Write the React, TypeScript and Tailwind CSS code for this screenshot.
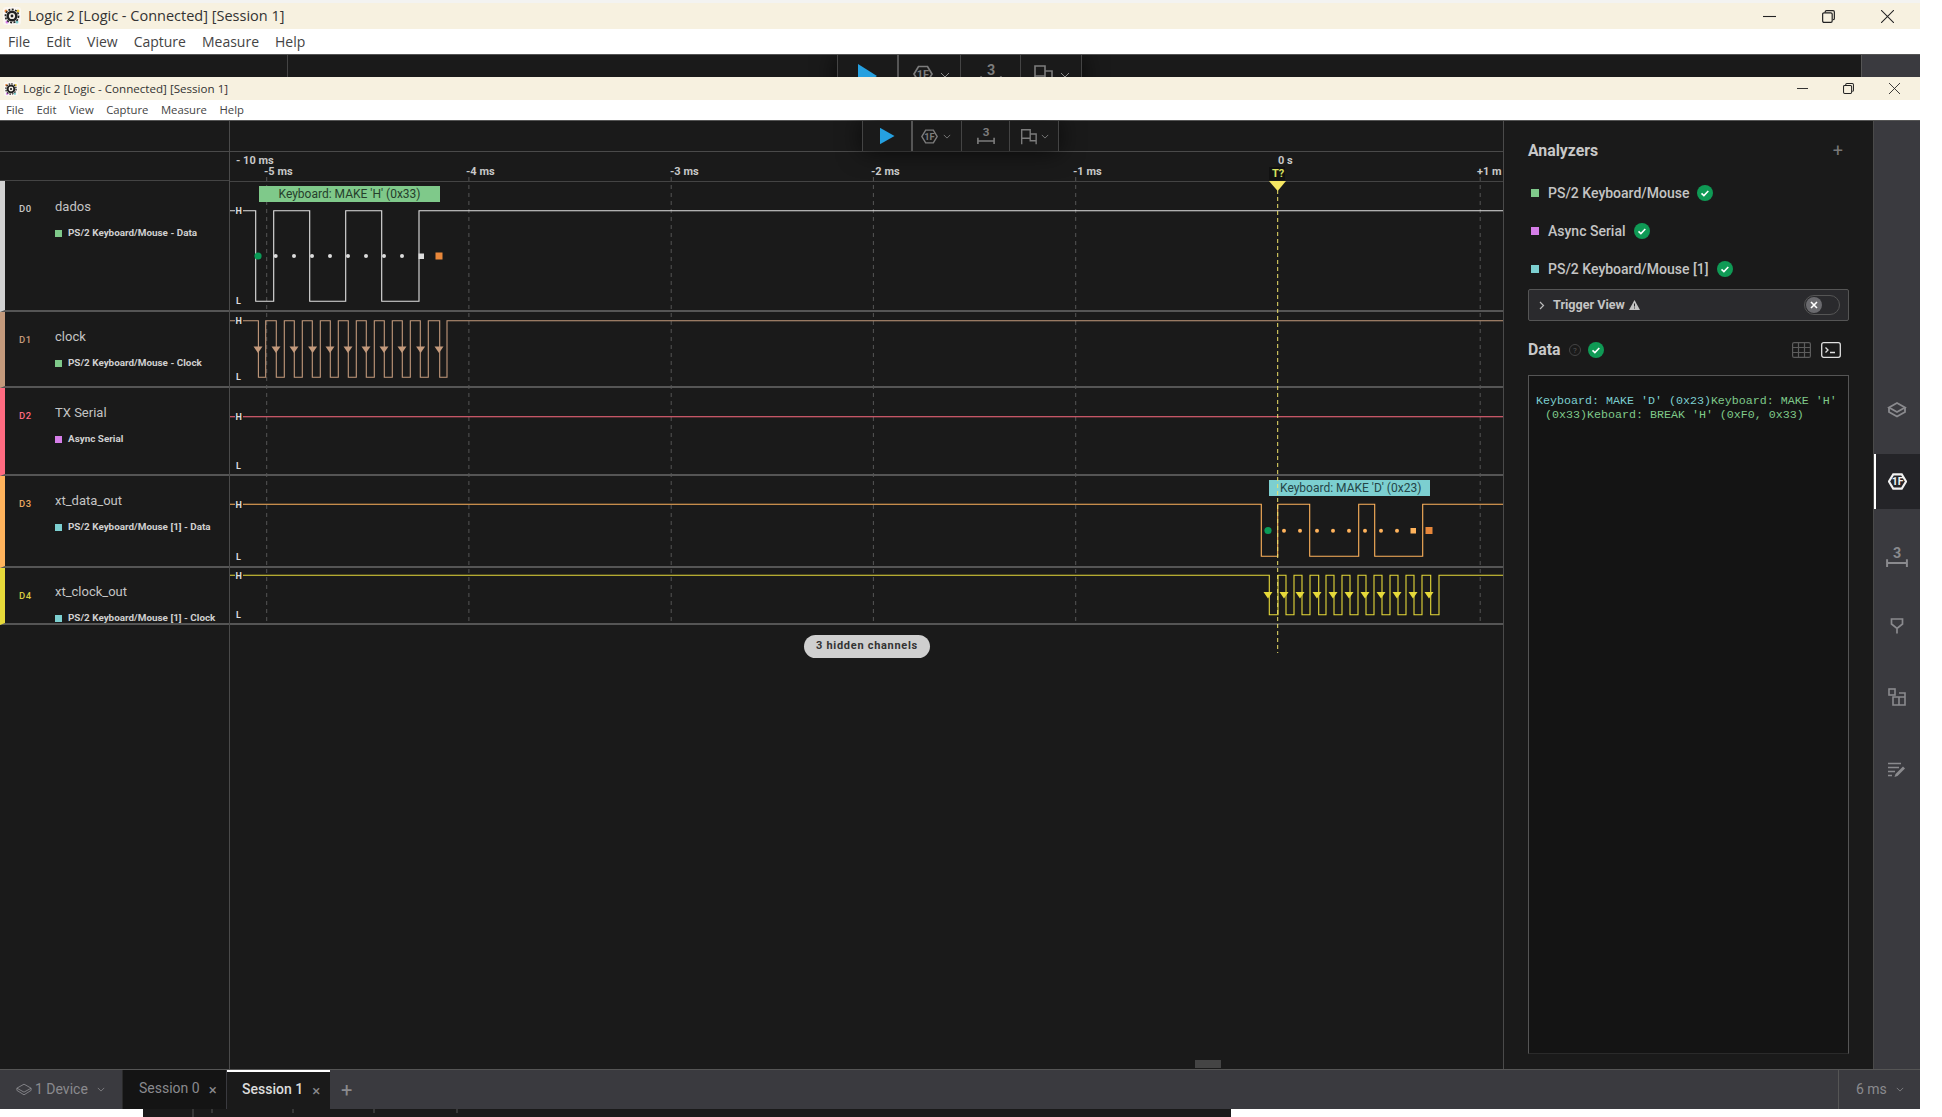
import React from "react";

const GRID = [266.7, 468.9, 671.2, 873.4, 1075.7, 1480.2];
const TICKS = [
  { x: 264, label: "-5 ms" },
  { x: 466, label: "-4 ms" },
  { x: 670, label: "-3 ms" },
  { x: 871, label: "-2 ms" },
  { x: 1073, label: "-1 ms" },
  { x: 1477, label: "+1 m" },
];
const SEPARATORS = [311, 387, 475, 567, 624];

interface Channel {
  id: string;
  name: string;
  analyzer: string;
  stripe: string;
  idColor: string;
  sq: string;
  height: string;
  pad: string;
}

const channels: Channel[] = [
  { id: "D0", name: "dados", analyzer: "PS/2 Keyboard/Mouse - Data", stripe: "border-l-[#d2d2d2]", idColor: "text-[#c8c8c8]", sq: "bg-[#7fc98a]", height: "h-[131px]", pad: "pt-[17px]" },
  { id: "D1", name: "clock", analyzer: "PS/2 Keyboard/Mouse - Clock", stripe: "border-l-[#c49a7c]", idColor: "text-[#c49a7c]", sq: "bg-[#7fc98a]", height: "h-[76px]", pad: "pt-[16px]" },
  { id: "D2", name: "TX Serial", analyzer: "Async Serial", stripe: "border-l-[#ff6b81]", idColor: "text-[#ff6b81]", sq: "bg-[#d57ee8]", height: "h-[88px]", pad: "pt-[16px]" },
  { id: "D3", name: "xt_data_out", analyzer: "PS/2 Keyboard/Mouse [1] - Data", stripe: "border-l-[#ffb35c]", idColor: "text-[#e8a860]", sq: "bg-[#7ccfd0]", height: "h-[92px]", pad: "pt-[16px]" },
  { id: "D4", name: "xt_clock_out", analyzer: "PS/2 Keyboard/Mouse [1] - Clock", stripe: "border-l-[#e6d93a]", idColor: "text-[#d8cc40]", sq: "bg-[#7ccfd0]", height: "h-[57px]", pad: "pt-[15px]" },
];

// builds a digital trace from its edges; starts high
function trace(high: number, low: number, edges: number[], end: number) {
  let d = `M230 ${high}`;
  edges.forEach((x, i) => {
    d += ` L${x} ${i % 2 === 0 ? high : low} L${x} ${i % 2 === 0 ? low : high}`;
  });
  return d + ` L${end} ${high}`;
}

const d0Edges = [255.7, 273.7, 309.7, 345.7, 381.7, 419];
const d1Edges = [258.4, 265.7, 276.3, 284.3, 294.3, 302.3, 312.3, 320.3, 330.3, 338.3, 348.3, 356.3, 366.3, 374.3, 384.3, 392.3, 402.3, 410.3, 420.3, 428.3, 439.7, 447];
const d3Edges = [1261.3, 1277.7, 1309.7, 1358.7, 1374.7, 1422.7];
const d4Edges = [1269.3, 1278, 1286, 1294, 1302, 1310, 1318.7, 1326, 1334, 1342, 1350, 1358, 1366, 1374, 1382, 1390, 1398, 1406, 1414, 1422, 1430.7, 1439];
const d1Arrows = [258, 276, 294, 312.6, 330, 348, 366, 384, 402, 420.6, 439];
const d4Arrows = [1268, 1284, 1300, 1317, 1333, 1349, 1365, 1381, 1397, 1413, 1429];
const d0Dots = [275.7, 294, 312, 330, 348, 366, 384, 402];
const d3Dots = [1284, 1300, 1317, 1333, 1349, 1365, 1381, 1397];

function HL({ high, low }: { high: number; low: number }) {
  return (
    <g className="font-[Roboto,sans-serif] text-[9px] font-bold fill-[#dcdcdc]">
      <rect x={235} y={high - 4} width={8} height={8} fill="#1a1a1a" />
      <text x={235.5} y={high + 3.2}>H</text>
      <text x={236} y={low + 3}>L</text>
    </g>
  );
}

function Arrows({ xs, y, color, w }: { xs: number[]; y: number; color: string; w: number }) {
  return (
    <>
      {xs.map((x) => (
        <polygon key={x} points={`${x - w},${y - 3} ${x + w},${y - 3} ${x},${y + 3.5}`} fill={color} />
      ))}
    </>
  );
}

function Timeline() {
  return (
    <svg className="block w-[1273px] h-[917px]" viewBox="230 152 1273 917">
      {GRID.map((x) => (
        <line key={x} x1={x} x2={x} y1={177} y2={624} stroke="#555" strokeWidth={1} strokeDasharray="4 4" />
      ))}
      <line x1={230} x2={1503} y1={181.5} y2={181.5} stroke="#444" />
      {SEPARATORS.map((y) => (
        <line key={y} x1={230} x2={1503} y1={y} y2={y} stroke="#555" strokeWidth={2} />
      ))}

      <g className="font-[Roboto,sans-serif] text-[11px] font-bold fill-[#c8c8c8]">
        <text x={236} y={164}>- 10 ms</text>
        {TICKS.map((t) => (
          <text key={t.label} x={t.x} y={175}>{t.label}</text>
        ))}
        <text x={1278} y={164}>0 s</text>
        <rect x={1269} y={167} width={16} height={13} fill="#111" />
        <text x={1272} y={177} className="fill-[#d8e060]">T?</text>
      </g>

      {/* D0 */}
      <path d={trace(210.7, 301.3, d0Edges, 1503)} fill="none" stroke="#e2e2e2" strokeWidth={1.1} />
      <HL high={210.7} low={301} />
      <circle cx={258} cy={256} r={3.6} fill="#0b9b57" />
      {d0Dots.map((x) => (
        <circle key={x} cx={x} cy={256} r={2} fill="#dcdcdc" />
      ))}
      <rect x={418.5} y={253.5} width={5.5} height={5.5} fill="#dcdcdc" />
      <rect x={435.5} y={252.5} width={7} height={7} fill="#e8873a" />
      <rect x={259} y={186} width={181} height={16} fill="#7fc98a" />
      <text x={349.5} y={198} textAnchor="middle" className="font-[Roboto,sans-serif] text-[12px] fill-[#26402c]">Keyboard: MAKE &#39;H&#39; (0x33)</text>

      {/* D1 */}
      <path d={trace(320.7, 377.3, d1Edges, 1503)} fill="none" stroke="#c49a7c" strokeWidth={1.1} />
      <HL high={320.7} low={377} />
      <Arrows xs={d1Arrows} y={349.5} color="#c49a7c" w={4.5} />

      {/* D2 */}
      <line x1={230} x2={1503} y1={416.7} y2={416.7} stroke="#ff6b81" strokeWidth={1.1} />
      <HL high={416.7} low={466} />

      {/* D3 */}
      <path d={trace(504.3, 556.3, d3Edges, 1503)} fill="none" stroke="#ffb35c" strokeWidth={1.1} />
      <HL high={504.3} low={557} />
      <circle cx={1268} cy={530.5} r={3.6} fill="#0b9b57" />
      {d3Dots.map((x) => (
        <circle key={x} cx={x} cy={530.7} r={2} fill="#ffb35c" />
      ))}
      <rect x={1410.5} y={528} width={5.5} height={5.5} fill="#ffb35c" />
      <rect x={1425.5} y={527} width={7} height={7} fill="#e8873a" />
      <rect x={1269} y={480} width={161} height={16} fill="#7ccfd0" />
      <text x={1280} y={492} className="font-[Roboto,sans-serif] text-[12px] fill-[#244548]">Keyboard: MAKE &#39;D&#39; (0x23)</text>

      {/* D4 */}
      <path d={trace(575.3, 614.7, d4Edges, 1503)} fill="none" stroke="#e6d93a" strokeWidth={1.1} />
      <HL high={575.3} low={615} />
      <Arrows xs={d4Arrows} y={595} color="#e6d93a" w={4.5} />

      {/* trigger cursor */}
      <line x1={1277.7} x2={1277.7} y1={190} y2={653} stroke="#efe36a" strokeWidth={1} strokeDasharray="4 3" />
      <polygon points="1269,181 1286,181 1277.7,191" fill="#f5e663" />
    </svg>
  );
}

function Hex({ size, white }: { size: number; white?: boolean }) {
  const c = white ? "#f2f2f2" : "#7c7c7c";
  return (
    <svg width={size} height={size} viewBox="0 0 20 20" fill="none">
      <path d="M5.5 2.5h9L19 10l-4.5 7.5h-9L1 10z" stroke={c} strokeWidth={white ? 2.2 : 1.7} />
      <text x={10} y={13.8} textAnchor="middle" fill={c} className="font-[Roboto,sans-serif] text-[11px] font-bold">1F</text>
    </svg>
  );
}

function Measure({ size, color = "#7c7c7c" }: { size: number; color?: string }) {
  return (
    <svg className="overflow-visible" width={size} height={size} viewBox="0 0 20 20" fill="none">
      <text x={10} y={10.5} textAnchor="middle" fill={color} className="font-[Roboto,sans-serif] text-[13px] font-bold">3</text>
      <path d="M1 12v7M19 12v7M1 15.5h18" stroke={color} strokeWidth={1.8} />
    </svg>
  );
}

function Marker({ size }: { size: number }) {
  return (
    <svg width={size} height={size} viewBox="0 0 20 20" fill="none" stroke="#7c7c7c" strokeWidth={1.6}>
      <path d="M2 19V2h10v10H2M12 7h7v12M12 12v3h7" />
    </svg>
  );
}

function Chevron({ className }: { className: string }) {
  return (
    <svg className={className} viewBox="0 0 10 6" fill="none" stroke="currentColor" strokeWidth={1}>
      <path d="M1 1l4 4 4-4" />
    </svg>
  );
}

function Logo({ size }: { size: number }) {
  return (
    <svg width={size} height={size} viewBox="0 0 18 18">
      <rect x={0} y={0} width={18} height={18} rx={3} fill="#fbf7f2" />
      <circle cx={3} cy={4} r={1.5} fill="#e8873a" />
      <circle cx={15} cy={4} r={1.5} fill="#e8c23a" />
      <circle cx={4} cy={15} r={1.5} fill="#d57ee8" />
      <circle cx={14} cy={15} r={1.5} fill="#7ccfd0" />
      <circle cx={9} cy={9} r={6.6} fill="none" stroke="#222" strokeWidth={1.6} strokeDasharray="2 1.4" />
      <circle cx={9} cy={9} r={5.6} fill="#222" />
      <circle cx={9} cy={9} r={3.1} fill="#f4f0e8" />
      <circle cx={9} cy={9} r={1.4} fill="#222" />
    </svg>
  );
}

function WinControls({ big }: { big?: boolean }) {
  return (
    <div className={big ? "flex items-center gap-[46px] pr-[26px]" : "flex items-center gap-[35px] pr-[20px]"}>
      <svg className={big ? "w-[13px] h-[13px]" : "w-[11px] h-[11px]"} viewBox="0 0 12 12" stroke="#222" strokeWidth={1}>
        <path d="M0 6h12" />
      </svg>
      <svg className={big ? "w-[13px] h-[13px]" : "w-[11px] h-[11px]"} viewBox="0 0 12 12" fill="none" stroke="#222" strokeWidth={1.1}>
        <rect x={0.6} y={2.6} width={8.8} height={8.8} rx={1.2} />
        <path d="M3 2.4V1.7Q3 .6 4.2 .6h6Q11.4 .6 11.4 1.8v6q0 1.2-1.4 1.2" />
      </svg>
      <svg className={big ? "w-[13px] h-[13px]" : "w-[11px] h-[11px]"} viewBox="0 0 12 12" stroke="#222" strokeWidth={0.95}>
        <path d="M0 0l12 12M12 0L0 12" />
      </svg>
    </div>
  );
}

function Check() {
  return (
    <svg width={16} height={16} viewBox="0 0 16 16">
      <circle cx={8} cy={8} r={8} fill="#0f9a55" />
      <path d="M4.5 8.3l2.4 2.3 4.4-4.6" fill="none" stroke="#fff" strokeWidth={1.6} />
    </svg>
  );
}

function Analyzer({ color, name }: { color: string; name: string }) {
  return (
    <div className="flex items-center h-[38px] pl-[3px]">
      <div className={`w-[8px] h-[8px] ${color}`} />
      <span className="ml-[9px] mr-[8px] text-[14px] font-medium text-[#c4c4c4]">{name}</span>
      <Check />
    </div>
  );
}

const sessionTab = "flex items-center h-full pb-[3px] text-[14px]";
const sideSlot = "flex items-center justify-center h-[20px]";

export default function App() {
  return (
    <div className="w-[1942px] h-[1117px] bg-white overflow-hidden font-[Roboto,sans-serif]">
      <div className="w-[1920px]">
        {/* outer window chrome */}
        <div className="h-[29px] bg-[#f7f1e0] border-t-[3px] border-t-[#f3f3f1] flex items-center pl-[3px]">
          <Logo size={18} />
          <span className="ml-[7px] text-[14.5px] text-[#333] font-['Open_Sans',sans-serif]">Logic 2 [Logic - Connected] [Session 1]</span>
          <div className="flex-1" />
          <WinControls big />
        </div>
        <div className="h-[25px] bg-white flex items-center pl-[8px] gap-[16px] text-[14px] text-[#444] font-['Open_Sans',sans-serif] pb-[1px]">
          <span>File</span><span>Edit</span><span>View</span><span>Capture</span><span>Measure</span><span>Help</span>
        </div>
        <div className="h-[23px] bg-[#1a1a1a] border-t border-t-[#555] flex overflow-hidden">
          <div className="w-[288px] h-full border-r border-r-[#444]" />
          <div className="ml-[549px] h-[40px] flex items-start border-l border-l-[#444] shadow-[0_0_24px_rgba(0,0,0,0.7)]">
            <div className="w-[61px] h-full flex justify-center pt-[9px] border-r-2 border-r-[#555]">
              <div className="w-[19px] h-[24px] bg-[#25a0e0] [clip-path:polygon(0_0,100%_50%,0_100%)]" />
            </div>
            <div className="w-[62px] h-full flex items-start gap-[7px] pl-[14px] pt-[9px] border-r border-r-[#444] text-[#8a8a8a]">
              <Hex size={20} />
              <Chevron className="w-[10px] h-[6px] mt-[8px]" />
            </div>
            <div className="w-[60px] h-full flex justify-center pt-[8px] border-r border-r-[#444]">
              <Measure size={22} />
            </div>
            <div className="w-[61px] h-full flex items-start gap-[7px] pl-[12px] pt-[9px] border-r border-r-[#444] text-[#8a8a8a]">
              <Marker size={20} />
              <Chevron className="w-[10px] h-[6px] mt-[8px]" />
            </div>
          </div>
          <div className="flex-1" />
          <div className="w-[59px] h-full bg-[#3a3a3f] border-l border-l-[#555]" />
        </div>

        {/* inner window chrome */}
        <div className="relative z-10 h-[23px] bg-[#f7f1e0] flex items-center pl-[4px]">
          <Logo size={14} />
          <span className="ml-[5px] text-[11.6px] text-[#333] font-['Open_Sans',sans-serif]">Logic 2 [Logic - Connected] [Session 1]</span>
          <div className="flex-1" />
          <WinControls />
        </div>
        <div className="relative z-10 h-[20px] bg-white flex items-center pl-[6px] gap-[12.5px] text-[11.3px] text-[#444] font-['Open_Sans',sans-serif]">
          <span>File</span><span>Edit</span><span>View</span><span>Capture</span><span>Measure</span><span>Help</span>
        </div>

        {/* main */}
        <div className="h-[949px] flex bg-[#1a1a1a] border-t border-t-[#555]">
          <div className="w-[1504px] border-r border-r-[#4a4a4a] flex flex-col">
            <div className="h-[31px] flex border-b border-b-[#4a4a4a]">
              <div className="w-[230px] border-r border-r-[#4a4a4a]" />
              <div className="ml-[632px] flex relative border-l border-l-[#444] shadow-[0_0_24px_rgba(0,0,0,0.7)]">
                <div className="w-[50px] flex items-center justify-center border-r-2 border-r-[#555]">
                  <div className="w-[15px] h-[17px] bg-[#25a0e0] [clip-path:polygon(0_0,100%_50%,0_100%)]" />
                </div>
                <div className="w-[49px] flex items-center gap-[5px] pl-[8px] border-r border-r-[#444] text-[#8a8a8a]">
                  <Hex size={17} />
                  <Chevron className="w-[8px] h-[5px]" />
                </div>
                <div className="w-[48px] flex items-center justify-center border-r border-r-[#444]">
                  <Measure size={18} />
                </div>
                <div className="w-[49px] flex items-center gap-[4px] pl-[10px] border-r border-r-[#444] text-[#8a8a8a]">
                  <Marker size={17} />
                  <Chevron className="w-[8px] h-[5px]" />
                </div>
              </div>
            </div>

            <div className="flex-1 flex min-h-0">
              <div className="w-[230px] border-r border-r-[#4a4a4a]">
                <div className="h-[29px] border-b border-b-[#444]" />
                {channels.map((c) => (
                  <div key={c.id} className={`${c.height} border-b-2 border-b-[#555] border-l-[5px] ${c.stripe} flex overflow-hidden`}>
                    <div className={`w-[50px] pl-[14px] pt-[21px] text-[9.5px] font-medium tracking-[0.5px] ${c.idColor}`}>{c.id}</div>
                    <div className={c.pad}>
                      <div className="h-[18px] leading-[18px] text-[13px] text-[#c4c4c4]">{c.name}</div>
                      <div className="flex items-center mt-[10px] h-[14px]">
                        <div className={`w-[7px] h-[7px] ${c.sq}`} />
                        <span className="ml-[6px] text-[9.9px] font-bold text-[#d0d0d0] whitespace-nowrap">{c.analyzer}</span>
                      </div>
                    </div>
                  </div>
                ))}
              </div>
              <div className="relative flex-1 overflow-hidden">
                <Timeline />
                <div className="absolute left-[574px] top-[483px] w-[126px] h-[23px] rounded-full bg-[#cfcfcf] flex items-center justify-center text-[11px] font-bold tracking-[0.7px] text-[#333]">
                  3 hidden channels
                </div>
                <div className="absolute left-[965px] top-[908px] w-[26px] h-[8px] bg-[#444]" />
              </div>
            </div>
          </div>

          {/* analyzers panel */}
          <div className="w-[369px] px-[24px] flex flex-col">
            <div className="h-[60px] flex items-center justify-between pr-[6px]">
              <span className="text-[15.8px] font-bold text-[#c8c8c8]">Analyzers</span>
              <span className="text-[18px] text-[#777] leading-none">+</span>
            </div>
            <div className="flex flex-col -mt-[7px]">
              <Analyzer color="bg-[#7fc98a]" name="PS/2 Keyboard/Mouse" />
              <Analyzer color="bg-[#d57ee8]" name="Async Serial" />
              <Analyzer color="bg-[#7ccfd0]" name="PS/2 Keyboard/Mouse [1]" />
            </div>
            <div className="w-[321px] h-[32px] mt-[1px] bg-[#2a2a2d] border border-[#555] rounded-[2px] flex items-center pl-[10px] pr-[8px]">
              <svg width={6} height={9} viewBox="0 0 6 9" fill="none" stroke="#bbb" strokeWidth={1.2}>
                <path d="M1 1l3.5 3.5L1 8" />
              </svg>
              <span className="ml-[8px] text-[12.6px] font-bold text-[#c4c4c4]">Trigger View</span>
              <svg className="ml-[4px]" width={11} height={10} viewBox="0 0 11 10">
                <path d="M5.5 0L11 10H0z" fill="#c4c4c4" />
                <path d="M5.5 3.5v3M5.5 7.5v1" stroke="#2a2a2d" strokeWidth={1} />
              </svg>
              <div className="flex-1" />
              <div className="w-[36px] h-[20px] rounded-full border border-[#555] flex items-center">
                <div className="w-[16px] h-[16px] ml-[1px] rounded-full bg-[#6a6a6e] flex items-center justify-center">
                  <svg width={8} height={8} viewBox="0 0 8 8" stroke="#fff" strokeWidth={1.6}>
                    <path d="M1 1l6 6M7 1L1 7" />
                  </svg>
                </div>
              </div>
            </div>
            <div className="h-[54px] pt-[4px] flex items-center">
              <span className="text-[15.8px] font-bold text-[#c8c8c8]">Data</span>
              <svg className="ml-[8px]" width={12} height={12} viewBox="0 0 12 12" fill="none" stroke="#444">
                <circle cx={6} cy={6} r={5.5} />
                <text x={6} y={9} textAnchor="middle" fill="#555" stroke="none" className="text-[8px]">?</text>
              </svg>
              <div className="ml-[7px]"><Check /></div>
              <div className="flex-1" />
              <svg width={19} height={16} viewBox="0 0 19 16" fill="none" stroke="#5c5c5c" strokeWidth={1.2}>
                <rect x={0.6} y={0.6} width={17.8} height={14.8} rx={1.5} />
                <path d="M0.6 5.5h17.8M0.6 10.5h17.8M6.5 .6v14.8M12.5 .6v14.8" />
              </svg>
              <svg className="ml-[10px] mr-[8px]" width={20} height={16} viewBox="0 0 20 16" fill="none" stroke="#e0e0e0" strokeWidth={1.3}>
                <rect x={0.7} y={0.7} width={18.6} height={14.6} rx={2} />
                <path d="M4.5 5.5l2.5 2.5-2.5 2.5M9 10.5h5" />
              </svg>
            </div>
            <div className="w-[321px] h-[679px] bg-[#141414] border border-[#555] border-b-[#2a2a2a] pt-[18px] pl-[7px] font-['Liberation_Mono',monospace] text-[11.67px] leading-[14px] whitespace-pre">
              <div>
                <span className="text-[#7ccfd0]">Keyboard: MAKE &#39;D&#39; (0x23)</span>
                <span className="text-[#7fc98a]">Keyboard: MAKE &#39;H&#39;</span>
              </div>
              <div className="text-[#7fc98a] pl-[9px]">(0x33)Keboard: BREAK &#39;H&#39; (0xF0, 0x33)</div>
            </div>
          </div>

          {/* sidebar */}
          <div className="w-[47px] bg-[#3a3a3f] border-l border-l-[#4a4a4a] pt-[279px] flex flex-col">
            <div className={sideSlot}>
              <svg width={20} height={18} viewBox="0 0 20 18" fill="none" stroke="#8a8a8e" strokeWidth={1.8}>
                <path d="M10 2L18 6.5 10 11 2 6.5z" />
                <path d="M2 6.5v4.5L10 15.5 18 11V6.5" />
              </svg>
            </div>
            <div className="mt-[34px] flex items-center justify-center h-[55px] bg-[#242428] border-l-2 border-l-white pr-[2px]">
              <Hex size={19} white />
            </div>
            <div className={`${sideSlot} mt-[38px]`}><Measure size={22} color="#8a8a8e" /></div>
            <div className={`${sideSlot} mt-[48px]`}>
              <svg width={14} height={17} viewBox="0 0 14 16" fill="none" stroke="#8a8a8e" strokeWidth={1.7}>
                <path d="M1.5 1.5h11v5L7 11 1.5 6.5zM7 11v5" />
              </svg>
            </div>
            <div className={`${sideSlot} mt-[52px]`}>
              <svg width={18} height={18} viewBox="0 0 18 18" fill="none" stroke="#8a8a8e" strokeWidth={1.6}>
                <rect x={1} y={1} width={6} height={6} />
                <path d="M5 9h12v8H5zM11 5h6v12M11 9v8" />
              </svg>
            </div>
            <div className={`${sideSlot} mt-[53px]`}>
              <svg width={18} height={16} viewBox="0 0 18 16" fill="none" stroke="#8a8a8e" strokeWidth={1.6}>
                <path d="M0 1.5h13M0 5.5h11M0 9.5h7M0 13.5h4" />
                <path d="M6.5 15l1-3L15 4.5l2 2L9.5 14z" fill="#8a8a8e" stroke="none" />
              </svg>
            </div>
          </div>
        </div>

        {/* status bar */}
        <div className="h-[40px] bg-[#3a3a3f] border-t border-t-[#555] flex items-stretch text-[#8a8a8e]">
          <div className="w-[123px] flex items-center pl-[16px] text-[14px] border-r border-r-[#2a2a2a]">
            <svg width={16} height={13} viewBox="0 0 18 14" fill="none" stroke="#8a8a8e" strokeWidth={1}>
              <path d="M9 1L17 5.5 9 10 1 5.5zM1 5.5V8L9 13 17 8V5.5" />
            </svg>
            <span className="ml-[3px]">1 Device</span>
            <Chevron className="w-[8px] h-[5px] ml-[9px]" />
          </div>
          <div className={`${sessionTab} w-[103px] pl-[16px] bg-[#141414] text-[#8a8a8e]`}>
            <span>Session 0</span>
            <span className="ml-[9px] text-[15px] leading-none mt-[4px]">×</span>
          </div>
          <div className={`${sessionTab} w-[103px] ml-px pl-[15px] bg-[#1a1a1a] text-[#dcdcdc] font-medium border-t-2 border-t-white`}>
            <span>Session 1</span>
            <span className="ml-[9px] text-[15px] leading-none mt-[4px] text-[#8a8a8e] font-normal">×</span>
          </div>
          <span className="ml-[11px] self-center text-[20px] leading-none text-[#8a8a8e]">+</span>
          <div className="flex-1" />
          <div className="w-[82px] flex items-center pl-[17px] border-l border-l-[#555] text-[14px]">
            <span>6 ms</span>
            <Chevron className="w-[8px] h-[5px] ml-[9px]" />
          </div>
        </div>
      </div>

      {/* strip of the window behind */}
      <div className="ml-[143px] w-[1088px] h-[8px] bg-[#1a1a1a]">
        <svg className="block" width={1088} height={8} viewBox="0 0 1088 8" stroke="#555">
          <path d="M50 0v8M69 0v4M150 0v4M231 0v4M314 0v4" />
        </svg>
      </div>
    </div>
  );
}
